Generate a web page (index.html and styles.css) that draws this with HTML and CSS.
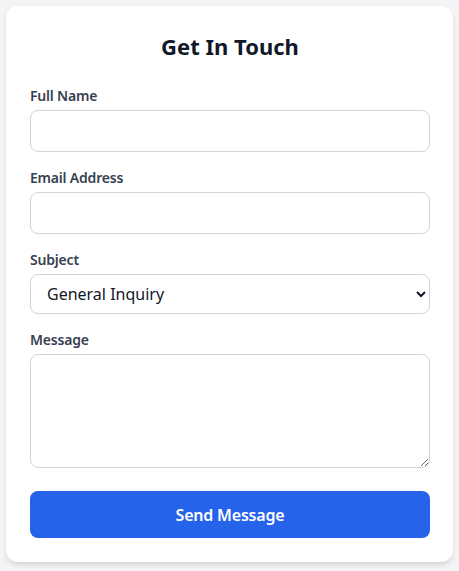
FILE: index.html
```html
<!DOCTYPE html>
<html lang="en">
<head>
<meta charset="utf-8">
<title>Get In Touch</title>
<link rel="stylesheet" href="styles.css">
</head>
<body>
<div class="card">
  <h1 class="title">Get In Touch</h1>
  <form class="form">
    <div class="group">
      <label class="label" for="name">Full Name</label>
      <input class="field" id="name" type="text">
    </div>
    <div class="group">
      <label class="label" for="email">Email Address</label>
      <input class="field" id="email" type="email">
    </div>
    <div class="group">
      <label class="label" for="subject">Subject</label>
      <select class="field select" id="subject">
        <option>General Inquiry</option>
        <option>Support</option>
        <option>Feedback</option>
      </select>
    </div>
    <div class="group">
      <label class="label" for="message">Message</label>
      <textarea class="field textarea" id="message"></textarea>
    </div>
    <button class="button" type="button">Send Message</button>
  </form>
</div>
</body>
</html>
```
FILE: styles.css
```css
* { box-sizing: border-box; }
html, body { margin: 0; }
body {
  background: #f3f4f6;
  padding: 6px;
  font-family: "Noto Sans", "Open Sans", Arial, sans-serif;
}
.card {
  background: #ffffff;
  border-radius: 12px;
  box-shadow: 0 4px 6px -1px rgba(0,0,0,0.1), 0 2px 4px -1px rgba(0,0,0,0.06);
  padding: 24px 23px 24px 24px;
}
.title {
  margin: 0 0 24px;
  text-align: center;
  font-size: 22px;
  line-height: 32px;
  font-weight: 700;
  color: #111827;
}
.form { display: flex; flex-direction: column; }
.group { display: flex; flex-direction: column; margin-bottom: 16px; }
.label {
  font-size: 14px;
  line-height: 20px;
  font-weight: 600;
  color: #374151;
  margin-bottom: 4px;
  letter-spacing: -0.2px;
}
.field {
  width: 100%;
  height: 42px;
  border: 1px solid #d1d5db;
  border-radius: 8px;
  padding: 10px 12px;
  font-family: inherit;
  font-size: 16px;
  color: #111827;
  background: #ffffff;
  outline: none;
}
.select { height: 40px; padding: 0 8px 0 12px; }
.textarea { height: 114px; resize: vertical; }
.button {
  margin-top: 7px;
  height: 47px;
  border: none;
  border-radius: 8px;
  background: #2563eb;
  color: #ffffff;
  font-family: inherit;
  font-size: 16px;
  font-weight: 600;
  letter-spacing: -0.2px;
  cursor: pointer;
}
```
